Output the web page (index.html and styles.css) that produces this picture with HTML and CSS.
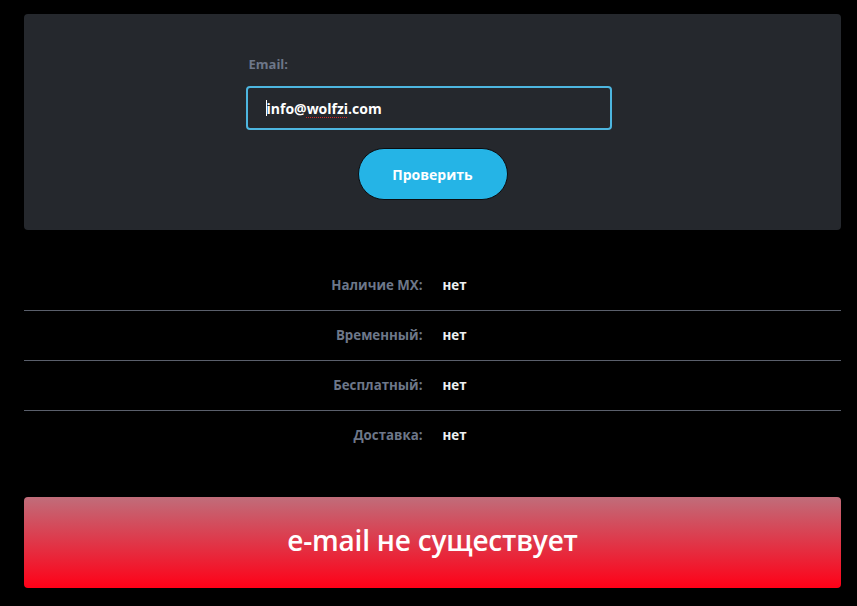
FILE: index.html
```html
<!DOCTYPE html>
<html lang="ru">
<head>
  <meta charset="UTF-8">
  <meta name="viewport" content="width=device-width, initial-scale=1.0">
  <title>Проверка email</title>
  <link rel="stylesheet" href="styles.css">
</head>
<body>
  <div class="wrap">
    <div class="card">
      <form class="form">
        <label class="label" for="email">Email:</label>
        <div class="field">
          <span class="caret"></span><span class="typed">info@<span class="typo">wolfzi</span>.com</span>
        </div>
        <button type="button" class="btn">Проверить</button>
      </form>
    </div>

    <div class="result">
      <div class="row">
        <span class="key">Наличие MX:</span>
        <span class="val">нет</span>
      </div>
      <div class="row">
        <span class="key">Временный:</span>
        <span class="val">нет</span>
      </div>
      <div class="row">
        <span class="key">Бесплатный:</span>
        <span class="val">нет</span>
      </div>
      <div class="row">
        <span class="key">Доставка:</span>
        <span class="val">нет</span>
      </div>
    </div>

    <div class="status">e-mail не существует</div>
  </div>
</body>
</html>
```

FILE: styles.css
```css
/* reset */
*{
  margin: 0;
  padding: 0;
  box-sizing: border-box;
}
html, body{
  background-color: #000;
}
body{
  font-family: "Open Sans", "Liberation Sans", sans-serif;
}
.wrap{
  margin: 14px 16px 0 24px;
}

/* форма */
.card{
  height: 216px;
  background-color: #25282d;
  border-radius: 4px;
  padding-top: 40px;
}
.form{
  width: 366px;
  margin: 0 auto;
  position: relative;
  left: -4px;
  display: flex;
  flex-direction: column;
  align-items: center;
}
.label{
  align-self: flex-start;
  margin-left: 3px;
  color: #6d7789;
  font-size: 13px;
  font-weight: 700;
  line-height: 20px;
  margin-bottom: 12px;
}
.field{
  width: 100%;
  height: 44px;
  border: 2px solid #4db6e0;
  border-radius: 4px;
  background-color: #25282d;
  padding-left: 18px;
  display: flex;
  align-items: center;
  color: #fff;
  font-size: 14px;
  font-weight: 700;
}
.caret{
  display: inline-block;
  width: 1px;
  height: 16px;
  background-color: #fff;
}
.typo{
  text-decoration: underline dotted #d02a2a;
  text-decoration-thickness: 1px;
  text-underline-offset: 3px;
}
.btn{
  margin-top: 18px;
  margin-left: 8px;
  width: 150px;
  height: 52px;
  border: 1px solid #0b0d10;
  border-radius: 26px;
  background-color: #25b4e6;
  color: #fff;
  font-family: inherit;
  font-size: 14px;
  font-weight: 700;
}

/* результат */
.result{
  margin-top: 31px;
}
.row{
  height: 50px;
  padding-bottom: 2px;
  display: grid;
  grid-template-columns: 1fr 1fr;
  column-gap: 20px;
  align-items: center;
  border-bottom: 1px solid #5a5f6b;
  font-size: 13.3px;
  font-weight: 700;
}
.row:last-child{
  border-bottom: none;
}
.key{
  text-align: right;
  color: #6d7789;
}
.val{
  color: #eef0f3;
}

/* статус */
.status{
  margin-top: 36px;
  height: 91px;
  padding-bottom: 6px;
  border-radius: 4px;
  background: linear-gradient(to bottom, #c06d7a, #ff0017);
  display: flex;
  align-items: center;
  justify-content: center;
  color: #fff;
  font-size: 28px;
  font-weight: 600;
  letter-spacing: -0.2px;
}
```
